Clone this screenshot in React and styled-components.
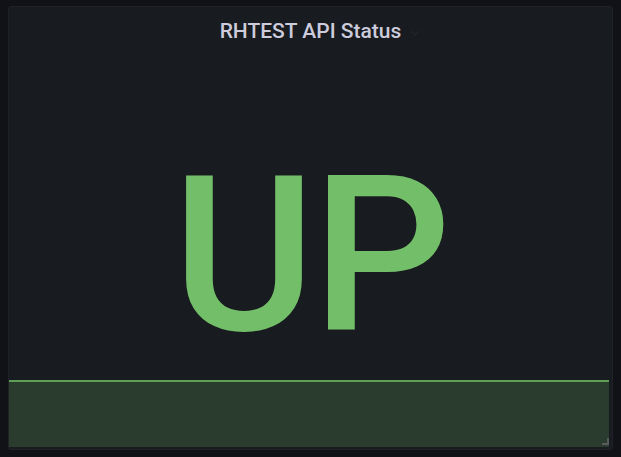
import React from 'react';
import styled, { createGlobalStyle } from 'styled-components';

const Global = createGlobalStyle`
html, body {
  margin: 0;
  background: #111217;
}
body {
  font-family: Roboto, "Noto Sans", sans-serif;
}
`

const Page = styled.div`
width: 621px;
height: 457px;
box-sizing: border-box;
padding: 6px 8px 7px 8px;
`

const Panel = styled.div`
position: relative;
height: 100%;
box-sizing: border-box;
display: flex;
flex-direction: column;
background: #181b1f;
border: 1px solid #202226;
border-radius: 3px;
overflow: hidden;
`

const Header = styled.div`
height: 35px;
flex: none;
display: flex;
align-items: flex-end;
justify-content: center;
`

const Title = styled.h2`
position: relative;
margin: 0;
font-size: 21px;
font-weight: 500;
line-height: 21px;
color: #ccccdc;
`

const Chevron = styled.svg`
position: absolute;
left: 100%;
top: 6px;
margin-left: 8px;
width: 12px;
height: 12px;
`

const Body = styled.div`
position: relative;
flex: 1;
display: flex;
align-items: center;
justify-content: center;
`

const Value = styled.div`
position: relative;
z-index: 1;
font-size: 218px;
line-height: 1;
font-weight: 500;
color: #73bf69;
letter-spacing: -3px;
margin-top: 20px;
`

const Spark = styled.svg`
position: absolute;
left: 0;
bottom: 2px;
width: calc(100% - 3px);
height: 67px;
display: block;
`

const Handle = styled.svg`
position: absolute;
right: 2px;
bottom: 3px;
width: 8px;
height: 8px;
`

export default function App() {
  return (
    <Page>
      <Global />
      <Panel>
        <Header>
          <Title>
            RHTEST API Status
            <Chevron viewBox="0 0 12 12">
              <path d="M2 4 L6 8 L10 4" fill="none" stroke="#212429" strokeWidth="1.5" />
            </Chevron>
          </Title>
        </Header>
        <Body>
          <Value>UP</Value>
          <Spark viewBox="0 0 600 67" preserveAspectRatio="none">
            <rect x="0" y="1" width="600" height="66" fill="#2a3c2e" />
            <line x1="0" y1="1" x2="600" y2="1" stroke="#5f9e57" strokeWidth="2" />
          </Spark>
          <Handle viewBox="0 0 8 8">
            <path d="M5 0 H7 V7 H0 V5 H5 Z" fill="#5a5a5e" />
          </Handle>
        </Body>
      </Panel>
    </Page>
  );
}
